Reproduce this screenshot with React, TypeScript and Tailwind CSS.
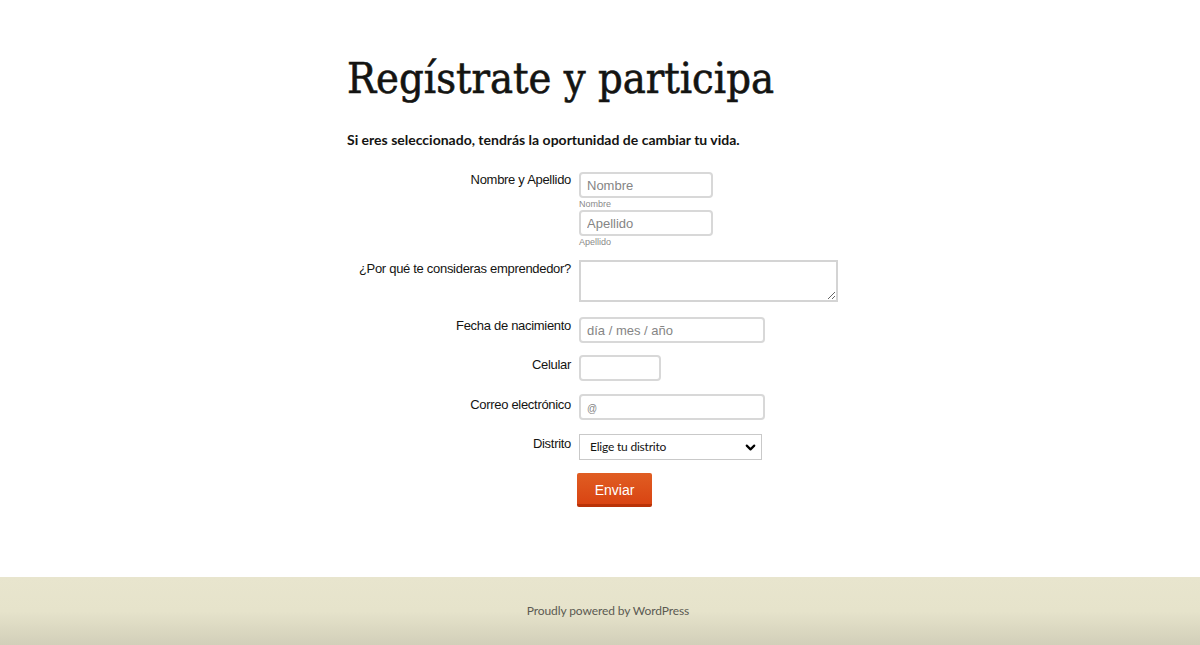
import { ChevronDown } from "lucide-react";

const label =
  "text-right text-[13px] leading-[15px] tracking-[-0.3px] text-[#141412] [font-family:'Liberation_Sans',Arial,sans-serif]";
const field =
  "h-[26px] rounded-[4px] border-2 border-[#d8d8d8] bg-white px-[6px] text-[13px] text-[#1a1a1a] placeholder:text-[#858585] outline-none [font-family:'Liberation_Sans',Arial,sans-serif]";
const hint = "mt-[1px] text-[9px] leading-[11px] text-[#8a8a8a] [font-family:'Liberation_Sans',Arial,sans-serif]";

function Row({ title, children, top = "pt-[1px]" }: { title: string; children: React.ReactNode; top?: string }) {
  return (
    <div className="flex gap-2">
      <div className={`w-[224px] shrink-0 ${label} ${top}`}>{title}</div>
      <div className="flex flex-col">{children}</div>
    </div>
  );
}

export default function App() {
  return (
    <div className="flex min-h-[645px] flex-col bg-white">
      <main className="mx-auto w-[506px] flex-1 pt-[52px]">
        <h1 className="text-[43px] leading-[52px] text-[#141412] [-webkit-text-stroke:0.6px_#141412] [font-family:'DejaVu_Serif_Condensed','DejaVu_Serif',serif]">
          Regístrate y participa
        </h1>
        <p className="mt-[25px] text-[14px] font-bold text-[#141412] [font-family:Lato,sans-serif]">
          Si eres seleccionado, tendrás la oportunidad de cambiar tu vida.
        </p>

        <form className="mt-[22px] flex flex-col" onSubmit={(e) => e.preventDefault()}>
          <Row title="Nombre y Apellido" top="pt-0">
            <input className={`${field} w-[134px]`} placeholder="Nombre" />
            <span className={hint}>Nombre</span>
            <input className={`${field} w-[134px]`} placeholder="Apellido" />
            <span className={hint}>Apellido</span>
          </Row>

          <div className="mt-[12px]">
            <Row title="¿Por qué te consideras emprendedor?">
              <textarea className="h-[42px] w-[259px] resize-y border-2 border-[#d4d4d4] bg-white px-[5px] outline-none" />
            </Row>
          </div>

          <div className="mt-[15px]">
            <Row title="Fecha de nacimiento">
              <input className={`${field} w-[186px]`} placeholder="día / mes / año" />
            </Row>
          </div>

          <div className="mt-[12px]">
            <Row title="Celular" top="pt-[2px]">
              <input className={`${field} w-[82px]`} />
            </Row>
          </div>

          <div className="mt-[13px]">
            <Row title="Correo electrónico" top="pt-[3px]">
              <input className={`${field} w-[186px] placeholder:text-[10px]`} placeholder="@" />
            </Row>
          </div>

          <div className="mt-[14px]">
            <Row title="Distrito" top="pt-[2px]">
              <div className="flex h-[26px] w-[183px] items-center justify-between border border-[#c9c9c9] bg-white pl-[10px] pr-[3px]">
                <span className="text-[12px] tracking-[-0.2px] text-[#141412] [font-family:Lato,sans-serif]">Elige tu distrito</span>
                <ChevronDown className="h-[15px] w-[15px] text-black" strokeWidth={3.5} />
              </div>
            </Row>
          </div>

          <div className="mt-[13px] flex">
            <div className="w-[230px] shrink-0" />
            <button
              type="submit"
              className="h-[34px] w-[75px] rounded-[2px] border-b-[3px] border-[#b93207] bg-gradient-to-b from-[#e05d22] to-[#d94412] pt-[3px] text-[14px] text-white [font-family:'Liberation_Sans',Arial,sans-serif]"
            >
              Enviar
            </button>
          </div>
        </form>
      </main>

      <footer className="mt-[69px] flex h-[68px] items-center justify-center bg-[linear-gradient(to_bottom,#e8e5ce_0%,#e6e3cb_50%,#d2cfb9_100%)] pl-4">
        <span className="text-[12px] tracking-[-0.1px] text-[#5b5a52] [font-family:Lato,sans-serif]">Proudly powered by WordPress</span>
      </footer>
    </div>
  );
}
